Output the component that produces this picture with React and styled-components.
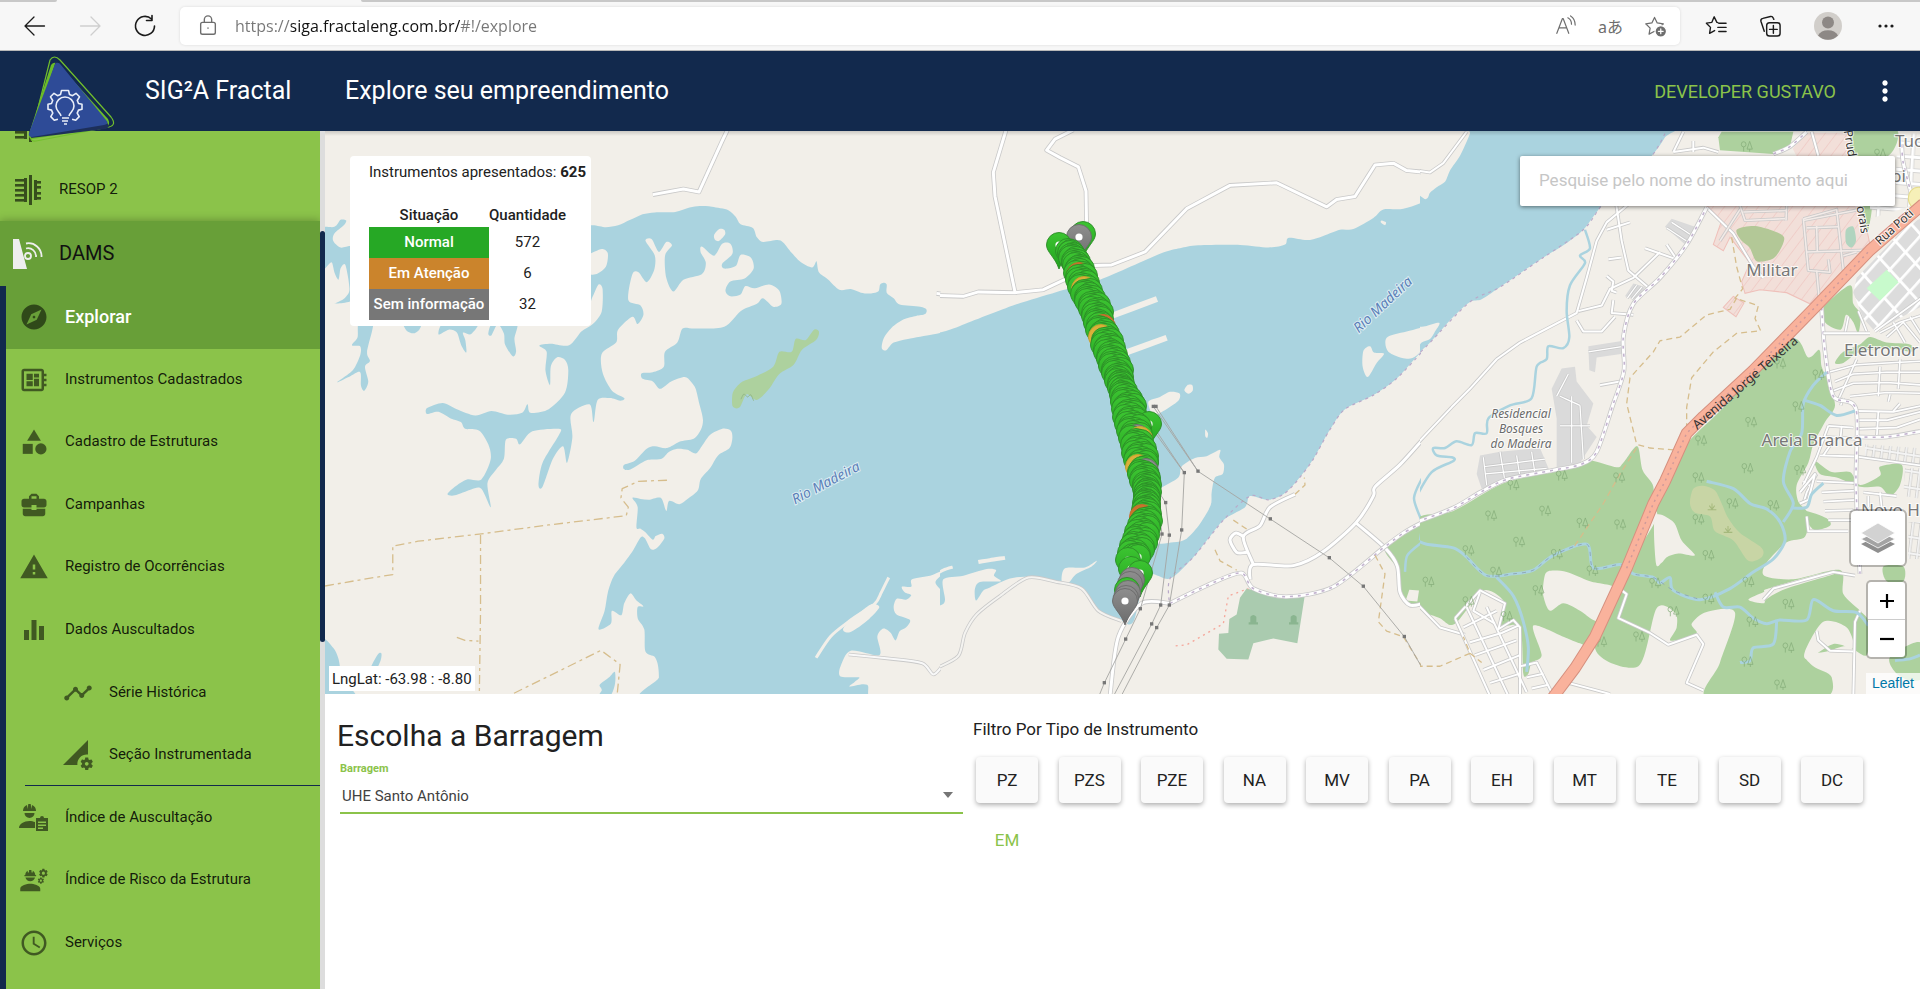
import React from "react";
import styled, { createGlobalStyle, css } from "styled-components";
import {
  MdExplore,
  MdDeveloperBoard,
  MdCategory,
  MdBusinessCenter,
  MdWarning,
  MdTimeline,
  MdPermDataSetting,
  MdAccessTime,
  MdEngineering,
  MdMoreVert,
} from "react-icons/md";

const NAVY = "#12294d";
const GREEN = "#8bc34a";
const DARK_GREEN = "#689f38";

const GlobalStyle = createGlobalStyle`
  *, *::before, *::after { box-sizing: border-box; }
  body { margin: 0; background: #fff; color: #212121; font-family: Roboto, "Liberation Sans", sans-serif; overflow: hidden; }
  button, input, select { font-family: inherit; margin: 0; }
  button { cursor: pointer; }
`;

const Page = styled.div`
  display: flex;
  flex-direction: column;
  height: 100vh;
`;

/* ---------- browser bar ---------- */

const BrowserBar = styled.div`
  flex: none;
  display: flex;
  flex-direction: column;
  height: 51px;
  background: #f7f7f7;
  border-bottom: 1px solid #b8b8b8;
`;

const TabStrip = styled.div`
  display: flex;
  gap: 304px;
  height: 2px;
  &::before { content: ""; width: 57px; background: #c8c8c8; border-bottom-right-radius: 2px; }
  &::after { content: ""; flex: 1; background: #c8c8c8; border-bottom-left-radius: 2px; }
`;

const BrowserRow = styled.div`
  flex: 1;
  display: flex;
  align-items: center;
  padding: 0 7px;
`;

const BarButton = styled.button`
  display: flex;
  align-items: center;
  justify-content: center;
  width: ${(p) => p.$w || 55}px;
  height: 38px;
  padding: 0;
  border: 0;
  background: none;
  color: ${(p) => p.$color || "#1b1b1b"};
  font: ${(p) => p.$size || 15}px "Noto Sans", "Noto Sans CJK JP", sans-serif;
`;

const AddressBox = styled.div`
  flex: 1;
  display: flex;
  align-items: center;
  height: 38px;
  margin: 0 8px;
  padding-right: 2px;
  border-radius: 5px;
  background: #fff;
  box-shadow: 0 0 3px rgba(0, 0, 0, 0.12);
`;

const Address = styled.input`
  flex: 1;
  min-width: 0;
  height: 28px;
  padding: 0;
  border: 0;
  outline: 0;
  color: transparent;
  background: linear-gradient(90deg, #767676 56px, #111 56px, #111 225px, #767676 225px);
  background-clip: text;
  -webkit-background-clip: text;
  font: 16px/28px "Open Sans", "Noto Sans", sans-serif;
`;

/* ---------- application header ---------- */

const Header = styled.header`
  position: relative;
  z-index: 3;
  flex: none;
  display: flex;
  align-items: center;
  height: 80px;
  padding-right: 19px;
  background: ${NAVY};
  color: #fff;
`;

const LogoLink = styled.a`
  flex: none;
  width: 145px;
  height: 80px;
  svg { display: block; overflow: visible; }
`;

const Brand = styled.span`
  width: 200px;
  font-size: 25px;
  line-height: 30px;
`;

const PageTitle = styled.h1`
  flex: 1;
  margin: 0;
  font-size: 25px;
  line-height: 30px;
  font-weight: 400;
`;

const UserButton = styled.button`
  border: 0;
  padding: 2px 0 0;
  background: none;
  color: ${GREEN};
  font-size: 18px;
  line-height: 24px;
`;

const MoreButton = styled.button`
  display: flex;
  margin-left: 33px;
  padding: 0;
  border: 0;
  background: none;
  color: #fff;
`;

/* ---------- side navigation ---------- */

const Body = styled.div`
  flex: 1;
  min-height: 0;
  display: flex;
`;

const Sidebar = styled.aside`
  flex: none;
  display: flex;
  width: 325px;
  background: ${GREEN};
`;

const NavScroll = styled.nav`
  flex: 1;
  min-width: 0;
  overflow: hidden;
`;

const ModuleList = styled.div`
  margin-top: -36px;
`;

const NavLabel = styled.span`
  padding-bottom: 2px;
`;

const ModuleLink = styled.a`
  display: flex;
  align-items: center;
  height: 63px;
  padding-left: 13px;
  gap: 16px;
  color: rgba(0, 0, 0, 0.87);
  font-size: 15px;
  text-decoration: none;
  svg { color: rgba(0, 0, 0, 0.6); }
  ${(p) =>
    p.$open &&
    css`
      height: 65px;
      background: ${DARK_GREEN};
      font-size: 20px;
      color: #111;
      box-shadow: 0 -1px 8px rgba(0, 0, 0, 0.25);
      svg { color: #eee; }
    `}
`;

const SubList = styled.div`
  display: grid;
  grid-auto-rows: 1fr;
  min-height: 688px;
  border-left: 6px solid ${NAVY};
  background: ${GREEN};
`;

const SubLink = styled.a`
  position: relative;
  display: flex;
  align-items: center;
  gap: 16px;
  padding-left: ${(p) => (p.$nested ? 57 : 13)}px;
  color: ${(p) => (p.$active ? "#fff" : "rgba(0,0,0,0.87)")};
  background: ${(p) => (p.$active ? DARK_GREEN : "transparent")};
  font-size: ${(p) => (p.$active ? 18 : 15)}px;
  font-weight: ${(p) => (p.$active ? 500 : 400)};
  text-decoration: none;
  svg { flex: none; color: rgba(0, 0, 0, 0.54); }
  ${(p) =>
    p.$ruled &&
    css`
      &::after {
        content: "";
        position: absolute;
        left: 19px;
        right: 0;
        bottom: 0;
        height: 1px;
        background: ${NAVY};
      }
    `}
`;

const NavFill = styled.div`
  height: 60px;
  border-left: 6px solid ${NAVY};
`;

const ScrollTrack = styled.div`
  flex: none;
  width: 5px;
  padding-top: 100px;
  background: #ddd;
`;

const ScrollThumb = styled.div`
  height: 411px;
  border-radius: 3px;
  background: ${NAVY};
`;

/* ---------- map ---------- */

const Main = styled.main`
  flex: 1;
  min-width: 0;
  display: flex;
  flex-direction: column;
`;

const MapArea = styled.section`
  position: relative;
  flex: none;
  height: 563px;
  overflow: hidden;
  background: #f2efe9;
  &::after {
    content: "";
    position: absolute;
    inset: 0 0 auto 0;
    height: 5px;
    background: linear-gradient(rgba(0, 0, 0, 0.16), transparent);
  }
`;

const MapDrawing = styled.svg`
  display: block;
  width: 100%;
  height: 100%;
`;

const SummaryCard = styled.div`
  position: absolute;
  top: 25px;
  left: 25px;
  width: 241px;
  padding: 4px 0 6px 19px;
  border-radius: 4px;
  background: #fff;
  font-size: 15px;
`;

const SummaryText = styled.p`
  margin: 0 0 18px;
  line-height: 24px;
  white-space: nowrap;
`;

const SummaryTable = styled.table`
  border-collapse: collapse;
  text-align: center;
  th, td { padding: 0; }
  thead th { height: 25px; font-weight: 500; }
  thead th:first-child { width: 120px; }
  tbody th, tbody td { height: 31px; padding-bottom: 2px; }
  tbody td { width: 77px; }
`;

const StatusCell = styled.th`
  background: ${(p) => p.$color};
  color: #fff;
  font-weight: 500;
  white-space: nowrap;
`;

const SearchInput = styled.input`
  position: absolute;
  top: 25px;
  right: 25px;
  width: 375px;
  height: 50px;
  padding: 0 19px 2px;
  border: 0;
  border-radius: 2px;
  background: #fff;
  box-shadow: 0 1px 4px rgba(0, 0, 0, 0.5);
  font-size: 17px;
  outline: 0;
  &::placeholder { color: #c6c6c6; opacity: 1; }
`;

const Coordinates = styled.div`
  position: absolute;
  left: 4px;
  bottom: 3px;
  padding: 1px 3px 0;
  background: #fff;
  font-size: 15px;
  line-height: 24px;
`;

const MapControls = styled.div`
  position: absolute;
  right: 13px;
  bottom: 35px;
  display: flex;
  flex-direction: column;
  align-items: flex-end;
  gap: 13px;
`;

const LayersButton = styled.button`
  display: flex;
  align-items: center;
  justify-content: center;
  width: 58px;
  height: 58px;
  padding: 0;
  border: 2px solid rgba(0, 0, 0, 0.25);
  border-radius: 6px;
  background: #fff;
  background-clip: padding-box;
`;

const ZoomGroup = styled.div`
  display: flex;
  flex-direction: column;
  width: 41px;
  border: 2px solid rgba(0, 0, 0, 0.25);
  border-radius: 5px;
  background: #fff;
  background-clip: padding-box;
`;

const ZoomButton = styled.button`
  display: flex;
  align-items: center;
  justify-content: center;
  height: 37px;
  padding: 0;
  border: 0;
  background: none;
  & + & { height: 38px; border-top: 1px solid #ccc; }
`;

const Attribution = styled.a`
  position: absolute;
  right: 0;
  bottom: 0;
  padding: 0 6px;
  background: rgba(255, 255, 255, 0.75);
  color: #0078a8;
  font: 14px/21px "Liberation Sans", sans-serif;
  text-decoration: none;
`;

/* ---------- filter panel ---------- */

const Panel = styled.section`
  display: grid;
  grid-template-columns: 2fr 3fr;
`;

const DamColumn = styled.div`
  display: flex;
  flex-direction: column;
  padding: 22px 0 0 12px;
`;

const DamTitle = styled.h2`
  margin: 0 0 5px;
  font-size: 30px;
  line-height: 40px;
  font-weight: 400;
`;

const FieldLabel = styled.label`
  padding-left: 3px;
  color: ${GREEN};
  font-size: 11px;
  line-height: 16px;
  font-weight: 700;
`;

const SelectWrap = styled.div`
  display: flex;
  align-items: center;
  height: 37px;
  margin-left: 3px;
  padding-right: 10px;
  border-bottom: 2px solid ${GREEN};
`;

const DamSelect = styled.select`
  flex: 1;
  height: 35px;
  padding: 2px 2px 0;
  border: 0;
  outline: 0;
  appearance: none;
  background: none;
  color: #424242;
  font-size: 15px;
`;

const FilterColumn = styled.div`
  padding: 23px 57px 0 10px;
`;

const FilterTitle = styled.h3`
  margin: 0 0 16px;
  font-size: 17px;
  line-height: 24px;
  font-weight: 400;
`;

const TypeGrid = styled.div`
  display: grid;
  grid-template-columns: repeat(11, 62px);
  justify-content: space-between;
  row-gap: 14px;
  padding-left: 3px;
`;

const TypeButton = styled.button`
  height: 46px;
  padding: 0;
  border: 0;
  border-radius: 4px;
  font-size: 17px;
  color: ${(p) => (p.$flat ? GREEN : "#212121")};
  background: ${(p) => (p.$flat ? "none" : "#fafafa")};
  box-shadow: ${(p) => (p.$flat ? "none" : "0 2px 5px rgba(0,0,0,0.32)")};
`;

/* ---------- small drawings ---------- */

const Line = ({ size = 24, width = 1.3, children, view = "0 0 24 24" }) => (
  <svg width={size} height={size} viewBox={view} fill="none" stroke="currentColor" strokeWidth={width} strokeLinecap="round" strokeLinejoin="round" aria-hidden="true">
    {children}
  </svg>
);

const Resop = () => (
  <svg width="30" height="30" viewBox="0 0 30 30" fill="currentColor" aria-hidden="true">
    {[4, 9, 14, 19, 24].map((y) => <rect key={y} x="2" y={y} width="9" height="2.6" />)}
    <path d="M11 3h3v24h-3zM16 0h3v30h-3zM21 5h3v20h-3z" />
    {[6, 11, 17, 22].map((y) => <rect key={y} x="24" y={y} width="4" height="2.6" />)}
  </svg>
);

const Dams = () => (
  <svg width="30" height="30" viewBox="0 0 30 30" fill="none" stroke="currentColor" strokeWidth="1.8" aria-hidden="true">
    <path d="M0 0h6l8 30H0z" fill="currentColor" stroke="none" />
    <circle cx="15" cy="17" r="3" />
    <path d="M13 9.500a8 8 0 0 1 10 8.500M13 4.500a13 13 0 0 1 15.500 13.500" />
  </svg>
);

const Bars = () => (
  <svg width="30" height="30" viewBox="0 0 30 30" fill="currentColor" aria-hidden="true">
    <path d="M5 15h5v10H5zM12.500 5h5v20h-5zM20 11h5v14h-5z" />
  </svg>
);

const WorkerReport = () => (
  <svg width="30" height="30" viewBox="0 0 30 30" fill="currentColor" aria-hidden="true">
    <path d="M4 8a6.500 6.500 0 0 1 4-6l.6 4L9.300 1h2.400l.7 5 .6-4a6.500 6.500 0 0 1 4 6H4zM5.500 10h10a5 5 0 0 1-10 0zM0 25c0-4 5-7 10.500-7 2 0 4 .4 5.500 1.100V25z" />
    <path d="M17 15h4a2 2 0 0 1 4 0h4v13H17zM19 18.500v1.500h8v-1.500zM19 21.500v1.500h8v-1.500zM19 24.500v1.500h5v-1.500z" fillRule="evenodd" />
  </svg>
);

const HALF_GEAR = "M65 90.500h3.500l1 4 3 1.200 3.500-2.400 3.500 3.500-2.200 3.700 1.200 3 3.500.8v5l-3.500.8-1.300 3 2 3.500-3.500 3.700-3.600-1";

const Logo = () => (
  <svg width="145" height="80" viewBox="0 51 145 80" aria-hidden="true">
    <path d="M50 60q4-6 10 0l51 57q6 8-2 10l-73 14q-6 1-5-5z" fill="none" stroke="#72c02c" strokeWidth="1.2" />
    <path d="M51 65q3-4 7-1l50 55q3 6-2 8l-73 12q-5 0-4-5z" fill="#6bbd28" />
    <path d="M56 61l52 63q2 4-3 5l-74 9z" fill="#1d2f5a" />
    <path d="M55 64q3-3 6 1l45 55q4 4-2 5l-72 12q-4 0-3-4z" fill="#2e4b97" />
    <g fill="none" stroke="#e9eef8" strokeWidth="1.6" strokeLinejoin="round">
      <path d={HALF_GEAR} />
      <path d={HALF_GEAR} transform="translate(130 0) scale(-1 1)" />
      <path d="M61 116c-1-4-5-5-5-10a9 9 0 0 1 18 0c0 5-4 6-5 10" />
      <path d="M62 118h7M62 121h6M64 124h3" />
    </g>
  </svg>
);

const Layers = () => (
  <svg width="34" height="31" viewBox="0 0 34 31" aria-hidden="true">
    <path d="M0 21l17-8 17 8-17 9z" fill="#8f8f8f" />
    <path d="M0 16l17-8 17 8-17 9z" fill="#a4a4a4" stroke="#fff" strokeWidth=".8" />
    <path d="M0 10L17 0l17 10-17 10z" fill="#d2d2d2" stroke="#fff" strokeWidth=".8" />
  </svg>
);

/* ---------- map drawing ---------- */

const parse = (s) => s.trim().split(/\s+/).map((p) => p.split(",").map(Number));

const straight = (s) => "M" + parse(s).map((p) => p.join(",")).join("L");

// Catmull-Rom curve through the listed points
const curve = (s, closed) => {
  const p = parse(s);
  const n = p.length;
  const at = (i) => (closed ? p[(i + n) % n] : p[Math.max(0, Math.min(n - 1, i))]);
  let d = "M" + p[0].join(",");
  for (let i = 0; i < (closed ? n : n - 1); i++) {
    const [a, b, c, e] = [at(i - 1), at(i), at(i + 1), at(i + 2)];
    const r = (v) => Math.round(v);
    d += `C${r(b[0] + (c[0] - a[0]) / 7)},${r(b[1] + (c[1] - a[1]) / 7)} ${r(c[0] - (e[0] - b[0]) / 7)},${r(c[1] - (e[1] - b[1]) / 7)} ${c[0]},${c[1]}`;
  }
  return closed ? d + "Z" : d;
};

const WATER = "#aad3df";
const LAND = "#f2efe9";
const WOOD = "#add19e";

const Area = ({ pts, fill = WATER, ...rest }) => <path d={curve(pts, true)} fill={fill} {...rest} />;
const Poly = ({ pts, fill, ...rest }) => <path d={straight(pts) + "Z"} fill={fill} {...rest} />;
const Stroke = ({ pts, color, w = 1, sharp, ...rest }) => (
  <path d={sharp ? straight(pts) : curve(pts)} fill="none" stroke={color} strokeWidth={w} vectorEffect="non-scaling-stroke" strokeLinejoin="round" {...rest} />
);
const Roads = ({ lines, w = 3, casing = "#c9c9c9", color = "#fff", sharp, dots }) => (
  <g>
    {lines.map((l) => <Stroke key={l} pts={l} sharp={sharp} color={casing} w={w + 1.6} />)}
    {lines.map((l) => <Stroke key={l} pts={l} sharp={sharp} color={color} w={w} />)}
    {dots && lines.map((l) => <Stroke key={l} pts={l} sharp={sharp} color="#c3b3cf" w={1.6} strokeDasharray="3 5" />)}
  </g>
);
const Tracks = ({ lines, color = "#d6bd8c", dash = "6 4" }) =>
  lines.map((l) => <Stroke key={l} pts={l} color={color} w={1.3} sharp strokeDasharray={dash} />);

const MAIN_LAKE =
  "664,258 700,263 730,258 760,243 790,228 820,223 870,222 905,210 930,206 960,208 1000,217 1018,235 1030,255 1060,265 1070,290 1085,303 1120,298 1135,305 1155,332 1175,355 1205,372 1216,355 1222,385 1245,405 1272,432 1300,430 1325,440 1350,442 1368,436 1372,418 1380,413 1388,418 1388,440 1405,455 1420,472 1470,478 1485,485 1482,498 1460,503 1430,512 1400,535 1380,565 1376,590 1387,596 1405,575 1440,565 1500,553 1540,543 1568,532 1620,515 1620,1560 825,1560 830,1480 828,1450 820,1425 797,1410 794,1350 778,1320 778,1290 792,1288 775,1272 760,1253 745,1280 738,1312 715,1300 712,1335 682,1350 697,1300 705,1250 720,1205 745,1170 765,1140 785,1102 795,1103 810,1133 825,1130 843,1105 838,1092 822,1098 815,1108 797,1088 785,1078 775,1075 778,1020 765,995 785,998 805,1000 835,995 848,1030 855,1003 880,1012 900,998 925,975 932,945 955,915 975,880 1003,860 1010,830 1005,812 985,808 955,825 935,855 920,875 900,865 875,862 855,870 835,890 800,893 760,918 744,917 745,905 770,895 800,862 820,855 850,860 880,843 915,835 933,810 938,785 930,745 920,700 908,680 893,668 860,680 833,700 815,680 790,673 788,658 815,655 842,640 845,600 875,575 888,537 920,537 990,532 1030,490 1070,470 1085,455 1110,478 1130,470 1125,435 1100,418 1065,428 1042,422 1030,445 1005,450 993,435 1005,410 1040,402 1062,375 1055,345 1030,338 1018,368 990,375 985,362 1010,335 1005,308 985,308 965,340 935,315 932,330 945,360 935,390 890,405 865,437 848,400 845,340 862,312 848,303 830,330 812,295 797,300 820,340 818,380 800,412 780,385 765,390 755,460 785,475 792,500 778,525 765,505 730,540 725,575 690,605 693,660 715,705 745,725 735,732 710,725 680,730 670,790 660,742 615,768 618,830 605,900 595,855 570,890 545,965 535,960 545,900 585,825 585,808 520,815 490,850 480,835 455,838 450,890 430,920 410,955 418,1020 395,970 370,972 330,988 312,985 330,965 360,945 395,945 418,890 412,850 390,813 355,808 345,790 320,780 290,762 262,768 262,752 300,738 335,755 380,772 420,760 460,770 495,765 508,742 515,765 560,755 600,710 608,650 600,622 580,615 565,640 563,690 552,650 555,600 537,583 565,578 610,582 640,545 668,525 690,490 692,430 682,418 668,450 655,480 640,420 655,395 680,388 700,370 705,335 690,322 650,335 640,280";

const West = () => (
  <svg x="0" y="0" width="616" height="563" viewBox="12 3 1509 1522" preserveAspectRatio="none">
    <Area pts={MAIN_LAKE} />
    <Area fill={LAND} pts="965,285 978,268 990,270 992,283 978,300 968,298" />
    <Area pts="-10,272 35,262 50,243 64,245 58,258 35,280 32,300 50,318 90,322 90,450 35,470 60,455 72,430 62,365 50,375 45,405 35,385 28,358 12,375 -10,390" />
    <Area pts="95,520 92,560 78,582 98,585 98,610 80,650 42,682 75,665 98,655 100,690 108,705 118,680 110,640 122,625 115,600 130,520" />
    <Area pts="205,520 212,543 228,550 243,540 248,515" />
    <Area pts="305,520 290,553 315,540 335,548 345,580 358,602 356,570 350,548 370,552 385,520" />
    <Area pts="425,520 412,550 420,555 435,525 450,550 453,580 472,612 480,600 476,565 482,520" />
    <Area pts="0,1380 32,1400 45,1430 55,1480 90,1540 0,1540" />
    <Area pts="150,1415 140,1420 118,1470 130,1475 148,1435" />
    <Area pts="722,1465 708,1480 685,1500 690,1515 676,1540 710,1530 722,1500" />
    <Area fill={WOOD} pts="1011,748 1010,715 1020,695 1035,680 1070,665 1110,640 1125,600 1155,600 1165,565 1190,568 1210,540 1222,545 1215,568 1180,595 1160,635 1125,660 1100,700 1070,730 1045,715 1028,750" />
    <Stroke pts="1031,728 1038,714 1047,722 1055,716 1062,732" color="#94b98a" w={1} />
    <Stroke pts="1393,1210 1375,1250 1358,1282 1300,1325 1250,1370 1215,1427" color={LAND} w={3} />
    <Area fill={LAND} pts="1370,1290 1345,1322 1298,1358 1283,1345 1345,1285" />
    <Area fill={LAND} pts="1550,1180 1500,1203 1450,1215 1448,1235 1425,1235 1432,1250 1448,1258 1435,1270 1412,1268 1405,1290 1412,1310 1445,1325 1435,1345 1420,1355 1410,1380 1398,1360 1380,1348 1365,1370 1370,1420 1300,1408 1275,1450 1275,1478 1320,1480 1310,1492 1297,1505 1340,1500 1365,1545 1600,1545 1600,1290 1523,1287 1523,1250 1508,1220" />
    <Roads lines={["815,175 890,160 928,168 985,30 1000,-5", "1510,442 1570,452"]} w={3} sharp />
    <Roads lines={["1295,1418 1400,1430 1475,1442 1503,1472 1530,1440"]} w={2} color="#f8f8f8" />
    <Tracks lines={["12,1233 90,1218 178,1202 178,1125 240,1112 395,1092 560,1068 750,1043 755,1020 737,995 740,970 780,950 852,947", "393,1095 393,1300 390,1530", "335,1372 355,1380 388,1382", "475,1523 600,1455 688,1407 735,1445 728,1523"]} dash="9 4 3 4" />
  </svg>
);

const pylons = "640,748 774,923 991,1052 1168,1157 1270,1234 1393,1370 733,927 725,1082 677,1008 688,1096 666,1093 662,1285 688,1285 601,1295 635,1336 650,1346 557,1377 493,1495 648,748";

const Center = () => (
  <svg x="615" y="0" width="481" height="563" viewBox="0 3 1443 1522" preserveAspectRatio="none">
    <Area pts="-60,560 0,548 60,530 225,473 350,438 480,405 660,335 720,320 775,312 900,311 985,318 1035,310 1045,292 1100,298 1140,290 1200,270 1240,268 1300,238 1330,215 1390,213 1460,190 1520,140 1520,530 1440,603 1370,672 1300,717 1215,755 1170,810 1120,890 1070,950 1030,985 985,1000 930,990 915,1020 850,1055 800,1110 760,1155 690,1213 620,1205 580,1330 540,1325 475,1297 430,1240 370,1222 265,1208 210,1213 150,1237 130,1245 108,1272 105,1240 120,1222 182,1220 162,1205 168,1190 140,1187 70,1205 10,1215 15,1270 0,1285 -60,1290" />
    <Area fill={LAND} pts="660,970 715,940 725,910 765,887 800,882 840,865 838,885 852,905 848,930 825,940 815,980 812,1015 780,1065 740,1105 700,1115 640,1110 620,1000" />
    <Area fill={LAND} pts="625,735 660,722 690,708 718,712 715,732 670,760 640,772" />
    <Area fill={LAND} pts="733,703 742,690 757,690 758,705 745,713" />
    <Area fill={LAND} pts="796,810 804,820 802,832 796,828" />
    <Stroke pts="500,508 651,457" color={LAND} w={6} />
    <Stroke pts="530,611 680,562" color={LAND} w={6} />
    <Area fill={LAND} pts="1340,562 1400,545 1495,525 1488,550 1430,610 1395,618 1345,600" />
    <Area fill={LAND} pts="1270,598 1290,585 1302,602 1332,605 1310,630 1283,668 1268,640" />
    <Area fill={LAND} pts="1325,245 1338,250 1335,258 1322,250" />
    <Stroke pts="115,1168 150,1163 195,1157" color={LAND} w={4} />
    <Stroke pts="-10,1200 10,1190 38,1182" color={LAND} w={3} />
    <Area fill={LAND} pts="365,1220 375,1185 435,1183 470,1165 455,1180 410,1200 385,1225" />
    <Stroke pts="1443,603 1370,672 1300,717 1215,755 1170,810 1120,890 1070,950 1030,985 985,1000 930,990 850,1055 760,1155 690,1213 688,1280" color="#b9a9c9" w={1.2} strokeDasharray="3 4" />
    <Area fill={WOOD} pts="1335,1135 1390,1095 1450,1060 1520,1040 1520,1330 1450,1280 1405,1285 1380,1250 1375,1190" />
    <Poly fill={LAND} pts="1408,1243 1437,1245 1432,1275 1397,1272" />
    <Poly fill="#aacbaf" pts="920,1240 1020,1265 1095,1255 1072,1388 1000,1375 940,1388 925,1432 860,1430 835,1405 837,1362 865,1360 868,1322 890,1310 900,1265" />
    <path d="M926,1337v-6h5v-15q9,-9 18,0v15h5v6zM1047,1337v-6h5v-15q9,-9 18,0v15h5v6z" fill="#8ab590" />
    <Roads sharp w={3} lines={["200,-5 160,115 165,180 225,438", "400,0 345,25 320,55 360,75 415,100 438,165 440,270", "0,448 70,450 115,438 225,440 310,432 380,402", "440,367 515,365 615,330 740,213 870,150 1010,143 1160,208 1190,188 1245,180 1305,95 1360,90 1400,110 1460,115"]} />
    <Roads w={2} color="#f4f3f0" lines={["-10,1455 55,1422 75,1360 110,1310 180,1260 265,1210 350,1222 425,1240 475,1300 545,1328"]} />
    <Roads lines={["930,1215 940,1175 1060,1178 1150,1140 1248,1062 1300,990 1305,965 1380,905 1450,835", "1248,1062 1335,1130 1372,1180 1380,1250 1410,1285 1450,1280", "940,1175 910,1100 960,1070 990,1020 1065,985", "912,1100 888,1090 870,1108 890,1142 922,1142", "510,1530 535,1370 605,1280 690,1280"]} />
    <Roads dots lines={["690,1280 830,1220 905,1198 940,1240 1040,1262 1180,1235 1330,1130 1390,1090 1450,1060"]} />
    <Stroke pts="1450,935 1422,995 1445,1060 1440,1110" color={WATER} w={2.500} />
    <Stroke pts="1445,1115 1402,1150 1395,1195" color={WATER} w={2.500} />
    <Tracks dash="2 4" color="#f5a79b" lines={["707,1395 740,1392 850,1335 865,1260 925,1240"]} />
    <Tracks lines={["1305,1150 1335,1200 1315,1330 1340,1355 1390,1370 1445,1450", "825,1135 840,1165 890,1190", "880,1055 930,1085", "1065,985 1095,960 1093,940"]} />
    {["640,748 774,923 991,1052 1168,1157 1270,1234 1393,1370 1446,1454", "648,748 774,923", "600,748 733,927 725,1082 688,1285 650,1346 545,1528", "630,800 733,927", "650,970 677,1008 688,1096 662,1285 635,1336 522,1528", "645,960 666,1093 601,1295 557,1377 493,1495 478,1528"].map((l) => (
      <Stroke key={l} pts={l} sharp color="#a5a5a2" w={0.9} />
    ))}
    {parse(pylons).map(([x, y]) => <rect key={x + "-" + y} x={x - 5} y={y - 5} width="10" height="9" fill="#777" />)}
  </svg>
);

const trees =
  "980,45 1080,632 1195,662 1135,748 993,790 843,840 982,915 835,940 937,1010 1060,1015 835,1053 865,1150 985,1222 865,1268 1105,1282 997,1330 1105,1400 982,1438 1080,1500 705,1225 760,1302 657,1370 543,1384 517,1192 600,1067 487,1063 375,1030 213,1043 297,1114 145,1137 410,1147 228,1195 25,1222 355,1245 260,1315 597,940 280,960 425,935 1140,920 1380,65 145,1275";

const TRUNK = "390,1545 465,1455 525,1370 620,1185 700,1010 735,950 800,820 850,775 1000,650 1190,475 1350,325 1510,200";

const East = () => (
  <svg x="1095" y="0" width="500" height="563" viewBox="0 3 1500 1522" preserveAspectRatio="none">
    <defs>
      <pattern id="hatch" width="26" height="26" patternUnits="userSpaceOnUse" patternTransform="rotate(40)">
        <rect width="26" height="26" fill="#f2dfd9" />
        <rect width="2" height="26" fill="#efc8c3" />
      </pattern>
      <pattern id="blocks" width="66" height="42" patternUnits="userSpaceOnUse" patternTransform="rotate(-45)">
        <rect width="66" height="42" fill="#dcdcdc" />
        <path d="M0 4h66M4 0v42" stroke="#fff" strokeWidth="8" />
      </pattern>
      <pattern id="streets" width="92" height="36" patternUnits="userSpaceOnUse" patternTransform="rotate(4)">
        <path d="M0 6h92M7 0v36" stroke="#cbcbcb" strokeWidth="12" />
        <path d="M0 6h92M7 0v36" stroke="#fff" strokeWidth="8" />
      </pattern>
      <pattern id="lanes" width="24" height="44" patternUnits="userSpaceOnUse" patternTransform="rotate(8)">
        <path d="M0 5h24M5 0v44" stroke="#c0c0c0" strokeWidth="8" />
        <path d="M0 5h24M5 0v44" stroke="#f4f4f4" strokeWidth="5" />
      </pattern>
      <g id="tree" stroke="#83ab77" strokeWidth="2" fill="none">
        <circle cx="-9" cy="-6" r="7" />
        <path d="M-9 1v12M9 -14l-8 21h16zM9 7v7" />
      </g>
    </defs>

    <Area pts="-40,200 18,187 30,170 50,155 75,140 90,110 120,70 150,10 165,-30 770,-30 735,20 700,65 620,140 545,205 490,270 430,312 370,345 240,425 185,458 150,465 95,510 30,575 0,600 -40,630" />
    <Area fill={LAND} pts="-20,540 20,530 58,522 45,545 30,565 5,575 -20,600" />
    <Stroke pts="735,10 700,65 620,140 545,205 490,270 370,345 240,425 150,465 30,575 0,602" color="#b9a9c9" w={1.2} strokeDasharray="3 4" />

    <Area fill={WOOD} pts="-20,1062 100,1030 250,955 400,925 480,905 510,893 590,912 610,900 652,855 668,920 700,965 690,1040 610,1180 560,1290 510,1388 480,1388 430,1370 340,1340 365,1420 335,1440 325,1470 310,1470 302,1350 262,1340 235,1350 255,1280 190,1245 105,1335 60,1320 -20,1270" />
    <Area fill={LAND} pts="372,1215 385,1193 440,1195 510,1220 600,1245 560,1330 520,1325 480,1300 430,1280 390,1300 370,1260" />
    <Area fill={WOOD} pts="1108,568 1165,615 1198,595 1205,640 1225,680 1245,745 1215,790 1180,850 1165,900 1130,960 1135,1005 1165,1040 1155,1100 1100,1115 1040,1170 1033,1205 1120,1215 1260,1190 1270,1255 1320,1300 1345,1330 1340,1420 1280,1395 1220,1410 1155,1420 1180,1450 1235,1480 1200,1540 865,1540 900,1440 945,1305 860,1303 815,1335 830,1360 790,1375 750,1380 770,1345 765,1305 710,1293 655,1450 525,1400 620,1190 710,1050 700,1000 800,850 900,760" />
    <Area fill={LAND} pts="705,1045 760,1060 785,1110 825,1150 775,1145 740,1155 725,1170 708,1172" />
    <Area fill={LAND} pts="985,1270 1030,1250 1045,1240 1200,1200 1258,1196 1100,1240 1040,1268 1030,1280" />
    <Area fill={LAND} pts="1210,1330 1280,1345 1300,1400 1240,1390 1165,1430 1155,1410" />
    <Area fill="#c8d5a5" pts="820,970 850,962 885,975 905,1010 925,1050 960,1090 1025,1130 1025,1155 985,1165 940,1110 885,1085 870,1045 825,1035 810,1010" />
    <Poly fill={WOOD} pts="905,5 1120,5 1110,45 1060,65 900,55 895,20" />
    <Area fill={WOOD} pts="1295,0 1430,0 1405,70 1300,70" />
    <Area fill={WOOD} pts="1210,480 1290,420 1300,470 1322,500 1315,550 1300,520 1278,500 1262,540 1215,520" />
    <Area fill={WOOD} pts="1245,630 1270,600 1320,580 1350,560 1400,575 1470,580 1480,600 1400,590 1320,600 1270,630" />
    <Area fill={WOOD} pts="1185,895 1235,925 1290,925 1320,960 1380,935 1380,910 1445,905 1440,960 1410,990 1380,965 1320,965 1250,940 1200,930" />
    <Area fill={WOOD} pts="1150,1030 1220,1050 1230,1070 1180,1080" />
    <Area fill={WOOD} pts="1390,1180 1450,1180 1450,1220 1400,1220" />
    <Area fill={WOOD} pts="1410,1425 1500,1385 1520,1470 1480,1490 1430,1470" />
    <Poly fill="url(#hatch)" stroke="#efc0ba" strokeWidth="3" pts="860,205 1325,205 1350,310 1170,470 1100,440 1020,432 975,442 965,410 990,360 930,290 910,327 880,310 905,245" />
    <Poly fill="url(#hatch)" pts="1118,50 1160,8 1290,8 1290,72 1130,72" />
    <Poly fill="url(#hatch)" stroke="#efc0ba" strokeWidth="3" pts="910,480 940,450 972,468 948,505" />
    <Area fill="#b3c897" pts="950,270 1000,260 1050,270 1092,290 1080,325 1055,350 1010,355 990,320 965,300" />
    <Area fill="#b0d4bf" pts="1278,270 1300,262 1308,300 1295,318 1278,305" />
    <Area fill={WOOD} pts="1325,205 1355,205 1345,270 1335,260" />
    <Poly fill="url(#blocks)" pts="1310,400 1460,260 1520,230 1520,470 1365,545 1330,510 1300,440" />
    <Poly fill="#c8facc" pts="1340,428 1400,378 1436,412 1380,462" />
    <Poly fill="url(#streets)" pts="1430,70 1520,70 1520,180 1460,210 1350,240 1350,205 1425,200" />
    <Poly fill="url(#streets)" pts="1440,10 1520,10 1520,70 1440,70" />

    <Poly fill="#dadada" pts="180,880 240,870 360,860 388,920 300,940 185,970 170,930" />
    <Poly fill="#dadada" pts="395,700 425,645 465,640 470,680 520,740 500,800 530,830 480,900 410,915 410,780" />
    <Poly fill="#dadada" pts="735,262 755,240 825,262 795,310" />
    <Poly fill="#dadada" pts="505,585 610,570 608,605 530,615 525,655 508,650" />
    <Poly fill="#dadada" pts="615,450 640,415 675,425 660,460" />
    <Poly fill="url(#lanes)" pts="1335,850 1520,862 1520,905 1460,900 1335,885" />
    <Poly fill="url(#lanes)" pts="1455,915 1520,915 1520,1000 1450,990" />
    <Poly fill="url(#lanes)" pts="1465,1060 1520,1060 1520,1160 1465,1160" />
    <Roads w={1.2} casing="#c9c9c9" lines={["190,885 200,960", "195,910 375,890", "195,930 380,915", "240,870 255,950", "290,880 300,940", "335,870 345,930", "410,720 445,660", "420,800 510,800", "455,720 455,900", "420,720 480,745", "480,745 490,890", "740,265 800,300", "755,250 815,285", "505,600 610,585", "622,455 650,420", "635,458 665,425"]} />
    <Roads sharp w={1.6} lines={["1225,655 1310,635 1400,630 1510,625", "1245,680 1300,660 1400,655 1510,655", "1240,705 1300,685 1400,683 1510,690", "1290,720 1400,710 1510,712", "1380,640 1375,720", "1440,620 1435,700", "1310,620 1255,730", "1270,725 1262,745", "1410,715 1405,735", "1365,545 1480,470 1510,450", "1380,548 1440,520 1510,500", "1400,560 1450,520 1500,575", "1420,520 1455,575", "1470,505 1505,555", "1315,490 1340,545", "1275,550 1285,505"]} />
    <Roads sharp w={1.8} lines={["1310,760 1420,762 1510,745", "1310,785 1400,785 1510,760", "1310,808 1430,805 1510,780", "1375,762 1370,835", "1420,760 1440,740", "1225,800 1300,805", "1265,800 1262,830", "1215,830 1310,835", "1200,880 1310,883 1510,908", "1225,800 1190,885 1150,960", "1240,840 1210,880", "1190,950 1310,955", "1205,980 1310,975", "1210,1005 1310,1000", "1215,1030 1300,1028", "1225,1055 1310,1055", "1190,930 1160,980 1150,1010", "1150,950 1175,965", "1380,980 1385,1020", "1345,990 1345,1020", "1330,980 1430,990"]} />
    <Roads sharp w={2} lines={["140,5 70,90 30,115 -10,110", "-10,850 95,750 150,700 230,620 300,575 470,495 500,400 530,300 560,250 640,190", "475,490 545,475 570,430 640,400 720,330", "585,180 605,300 625,380 690,430", "560,270 630,250", "675,320 770,350", "740,310 770,350", "860,210 940,280 1000,370 1030,400", "470,515 490,545 545,545 585,505", "565,350 605,345", "580,460 575,495 640,500", "540,690 600,680", "560,395 580,410 575,435 590,440"]} />
    <Roads dots w={3} lines={["-10,1060 100,1022 180,980 260,945 400,920 480,905 530,870 580,740 612,650 610,560 640,470 720,400 800,310 860,210", "1060,65 1110,45 1160,5", "1205,480 1215,600 1240,720 1308,755 1308,960 1320,1200", "1445,40 1450,90 1470,160", "1310,830 1400,830 1500,815"]} />
    <Roads sharp w={2} lines={["760,60 850,48 895,60", "820,30 820,60", "760,60 790,5", "1175,5 1195,70", "1210,550 1350,550", "1140,980 1185,930 1165,1000 1140,1010", "1160,1045 1165,1085 1285,1085", "605,1245 620,1255 595,1320 690,1360 745,1392 830,1365 850,1390 800,1495 850,1515", "1190,1355 1195,1380 1230,1408 1300,1410", "1030,1270 1060,1240 1240,1195 1305,1205", "1300,1530 1305,1330 1320,1300", "445,1495 570,1525", "-10,1280 60,1345 135,1365"]} />
    <Roads sharp w={1.6} color="#f3ebe8" lines={["960,205 975,245 1095,240", "970,222 1100,218", "1100,205 1098,245", "1150,240 1165,380 1230,385 1225,350", "1150,240 1250,215 1270,380", "1160,265 1255,262", "1150,245 1320,215", "1160,330 1350,325", "1190,260 1192,330", "1190,380 1200,480", "900,300 960,215", "1270,340 1310,330"]} />
    <Roads sharp w={2} lines={["105,1320 180,1245 255,1280 235,1350 280,1325 300,1345 300,1530", "105,1320 210,1530", "140,1290 265,1530", "180,1250 160,1300 225,1335", "200,1290 320,1520", "130,1345 230,1300", "150,1385 245,1360 295,1340", "165,1420 290,1380", "190,1460 300,1420", "210,1495 300,1470", "300,1450 350,1440 400,1530", "320,1480 370,1470", "335,1510 385,1500"]} />

    <Stroke pts="495,270 510,320 480,340 495,360 450,420 440,490 448,560 430,590 385,585 380,620 350,640 335,725 270,745 205,780 200,820 165,820 155,852 110,842 75,860 40,860 50,880 95,885 100,895 35,925 -10,990" color={WATER} w={2.500} />
    <Stroke pts="-10,1110 20,1120 100,1130 140,1155 200,1205 280,1200 340,1190 400,1150 500,1120 520,1185 600,1175 640,1200 700,1210 720,1225 750,1210 760,1245 840,1270 930,1240 1000,1195 1060,1160 1095,1110 1080,1060 1040,1025 990,1010 940,970 860,950" color={WATER} w={3} />
    <Stroke pts="1090,1060 1120,1010 1090,950 1110,870 1145,820 1150,740 1180,690 1220,655" color={WATER} w={3} />
    <Stroke pts="1150,730 1200,745 1250,772 1305,760" color={WATER} w={3} />
    <Stroke pts="1115,1022 1160,1020 1175,985 1210,955" color={WATER} w={3} />
    <Stroke pts="230,1210 280,1260 310,1330 325,1400 320,1465" color={WATER} w={3} />
    <Stroke pts="885,1250 910,1290 960,1290 1000,1320 1040,1335 1080,1325 1160,1325 1180,1270 1240,1300 1310,1305 1345,1340" color={WATER} w={3} />
    <Stroke pts="1070,1325 1060,1390 1000,1400 990,1435 960,1440" color={WATER} w={3} />
    <Stroke pts="1425,1435 1470,1430 1500,1420" color={WATER} w={3} />
    <Stroke pts="140,1155 200,1205 280,1200 340,1190 400,1150 500,1120 520,1185 600,1175 640,1200 700,1210 760,1245 840,1270" color="#8fa9b8" w={1} strokeDasharray="4 5" />

    <Tracks lines={["935,290 950,370 968,430 945,455 1015,475 1005,510 1022,543 950,550 880,600 815,670 800,750 800,810 760,865 690,860 650,850 620,740 630,670 700,600 720,570 780,560 860,500 930,485 950,455", "650,860 600,930 550,1010 460,1130", "-10,1450 60,1450 150,1415 130,1370", "150,1415 185,1440"]} />
    {parse(trees).map(([x, y]) => <use key={x + "-" + y} href="#tree" x={x} y={y} />)}
    <path d="M863 1027h26M876 1010v16M868 1016l8 10 8-10M911 1088h26M924 1071v16M916 1077l8 10 8-10" stroke="#a5b97d" strokeWidth="3" fill="none" />

    <circle cx="1495" cy="185" r="30" fill="#f6f0b8" stroke="#e5dc8c" strokeWidth="3" />
    <Stroke sharp pts={TRUNK} color="#d5907f" w={12} />
    <Stroke sharp pts={TRUNK} color="#f9b29c" w={10} />
    <Stroke sharp pts="620,1185 700,1010 735,950 800,820 850,775 1000,650 1190,475 1350,325" color="#cf9a9a" w={1.5} strokeDasharray="2 4" />
  </svg>
);

const PlaceLabel = styled.text`
  font-family: "Noto Sans", sans-serif;
  font-size: ${(p) => p.$size}px;
  font-style: ${(p) => (p.$italic ? "italic" : "normal")};
  text-anchor: ${(p) => (p.$start ? "start" : "middle")};
  fill: ${(p) => p.$color || "#777"};
  stroke: ${(p) => p.$halo || "rgba(255,255,255,0.8)"};
  stroke-width: 2px;
  paint-order: stroke;
`;

const PIN = "M0,24C-4,12 -12.500,7 -12.500,0A12.500,12.500 0 0 1 12.500,0C12.500,7 4,12 0,24Z";
const pinFill = { green: "url(#pinGreen)", grey: "url(#pinGrey)", amber: "#d9b13a", orange: "#c9742c" };
const pinEdge = { green: "#2b8a27", grey: "#6a6a6a", amber: "#c9a02e", orange: "#c96a2c" };

const Pin = ({ x, y, tone }) => (
  <g transform={`translate(${Math.round(x)} ${Math.round(y)})`}>
    <path d={PIN} fill={pinFill[tone]} stroke={pinEdge[tone]} strokeWidth="0.9" />
    <circle r="3.600" fill="#fff" />
  </g>
);

// left and right limits of the row of instruments along the dam, by height
const SPINE = [
  [120, 743, 745], [135, 750, 757], [150, 753, 761], [165, 759, 768], [180, 767, 776], [192, 771, 777],
  [210, 777, 786], [240, 788, 796], [258, 796, 798], [275, 798, 810], [290, 801, 812], [310, 807, 818],
  [330, 811, 822], [345, 815, 823], [360, 821, 824], [380, 819, 823], [392, 815, 826], [405, 811, 823], [418, 806, 818], [428, 803, 814],
];

const bandPins = () => {
  const pins = [];
  let k = 0;
  for (let y = 120; y < 426; y += 1.2) {
    const i = SPINE.findIndex(([sy]) => sy > y);
    const [a, b] = [SPINE[i - 1], SPINE[i]];
    const t = (y - a[0]) / (b[0] - a[0]);
    const lo = a[1] + (b[1] - a[1]) * t;
    const hi = a[2] + (b[2] - a[2]) * t;
    const spread = [0, 0.9, 0.35, 1, 0.15, 0.6][k % 6] * (0.8 + 0.2 * Math.abs(Math.sin(k * 1.7)));
    const tone = [20, 63, 222].includes(k) ? "orange" : [32, 72, 157, 180].includes(k) ? "amber" : [155, 183].includes(k) ? "grey" : "green";
    pins.push({ x: lo + (hi - lo) * spread, y, tone });
    k += 1;
  }
  return pins;
};

const PINS = [
  { x: 758, y: 103, tone: "green" },
  { x: 754, y: 106, tone: "grey" },
  { x: 734, y: 114, tone: "green" },
  ...bandPins(),
  { x: 824, y: 293, tone: "green" },
  { x: 811, y: 425, tone: "green" },
  { x: 803, y: 429, tone: "green" },
  { x: 806, y: 438, tone: "green" },
  { x: 815, y: 442, tone: "green" },
  { x: 807, y: 449, tone: "grey" },
  { x: 805, y: 453, tone: "grey" },
  { x: 802, y: 459, tone: "green" },
  { x: 803, y: 462, tone: "grey" },
  { x: 801, y: 467, tone: "grey" },
  { x: 800, y: 470, tone: "grey" },
].sort((a, b) => a.y - b.y);

const RIVER_LABEL = { $size: 14, $italic: true, $color: "#5b7fb8", $halo: "rgba(255,255,255,0.6)" };

const DamMap = () => (
  <MapDrawing viewBox="0 0 1595 563" preserveAspectRatio="xMidYMid slice" role="img" aria-label="Mapa dos instrumentos">
    <defs>
      <linearGradient id="pinGreen" x1="0" y1="0" x2="0" y2="1">
        <stop offset="0" stopColor="#3cc431" />
        <stop offset="1" stopColor="#22a21f" />
      </linearGradient>
      <linearGradient id="pinGrey" x1="0" y1="0" x2="0" y2="1">
        <stop offset="0" stopColor="#8e8e8e" />
        <stop offset="1" stopColor="#6c6c6c" />
      </linearGradient>
    </defs>
    <rect width="1595" height="563" fill={LAND} />
    <West />
    <Center />
    <East />
    <g>
      <PlaceLabel {...RIVER_LABEL} transform="translate(503 356) rotate(-28)">Rio Madeira</PlaceLabel>
      <PlaceLabel {...RIVER_LABEL} transform="translate(1061 177) rotate(-43)">Rio Madeira</PlaceLabel>
      <PlaceLabel $size={12} $italic $color="#6b6b6b" x="1196" y="287">Residencial</PlaceLabel>
      <PlaceLabel $size={12} $italic $color="#6b6b6b" x="1196" y="302">Bosques</PlaceLabel>
      <PlaceLabel $size={12} $italic $color="#6b6b6b" x="1196" y="317">do Madeira</PlaceLabel>
      <PlaceLabel $size={17} x="1447" y="145">Militar</PlaceLabel>
      <PlaceLabel $size={17} $start x="1519" y="225">Eletronor</PlaceLabel>
      <PlaceLabel $size={17} x="1487" y="315">Areia Branca</PlaceLabel>
      <PlaceLabel $size={17} $start x="1536" y="385">Novo H</PlaceLabel>
      <PlaceLabel $size={17} $start x="1570" y="16">Tuc</PlaceLabel>
      <PlaceLabel $size={17} $start x="1566" y="51">pi</PlaceLabel>
      <PlaceLabel $size={13} $color="#333" $halo="none" transform="translate(1423 255) rotate(-41)">Avenida Jorge Teixeira</PlaceLabel>
      <PlaceLabel $size={12} $color="#333" transform="translate(1572 99) rotate(-42)">Rua Poti</PlaceLabel>
      <PlaceLabel $size={12} $color="#333" transform="translate(1521 13) rotate(80)">Prud</PlaceLabel>
      <PlaceLabel $size={12} $color="#333" transform="translate(1533 84) rotate(80)">Morais</PlaceLabel>
    </g>
    {PINS.map((p, i) => <Pin key={i} {...p} />)}
  </MapDrawing>
);

/* ---------- data ---------- */

const SUBMENU = [
  { label: "Explorar", icon: <MdExplore size={30} />, active: true },
  { label: "Instrumentos Cadastrados", icon: <MdDeveloperBoard size={30} /> },
  { label: "Cadastro de Estruturas", icon: <MdCategory size={30} /> },
  { label: "Campanhas", icon: <MdBusinessCenter size={30} /> },
  { label: "Registro de Ocorrências", icon: <MdWarning size={30} /> },
  { label: "Dados Auscultados", icon: <Bars /> },
  { label: "Série Histórica", icon: <MdTimeline size={30} />, nested: true },
  { label: "Seção Instrumentada", icon: <MdPermDataSetting size={30} />, nested: true, ruled: true },
  { label: "Índice de Auscultação", icon: <WorkerReport /> },
  { label: "Índice de Risco da Estrutura", icon: <MdEngineering size={30} /> },
  { label: "Serviços", icon: <MdAccessTime size={30} /> },
];

const SUMMARY = [
  { label: "Normal", count: 572, color: "#26a825" },
  { label: "Em Atenção", count: 6, color: "#cb842c" },
  { label: "Sem informação", count: 32, color: "#777" },
];

const TYPES = ["PZ", "PZS", "PZE", "NA", "MV", "PA", "EH", "MT", "TE", "SD", "DC"];

const STAR = "M11 2.500l2.800 5.800 6.400.9-4.600 4.500 1 6.300L11 17l-5.700 3 1.100-6.300L1.800 9.200l6.400-.9z";

export default function App() {
  return (
    <Page>
      <GlobalStyle />
      <BrowserBar>
        <TabStrip />
        <BrowserRow>
          <BarButton aria-label="Voltar"><Line><path d="M21.500 12h-19M11 3l-9 9 9 9" /></Line></BarButton>
          <BarButton aria-label="Avançar" $color="#cfcfcf"><Line><path d="M2.500 12h19M13 3l9 9-9 9" /></Line></BarButton>
          <BarButton aria-label="Atualizar"><Line width={1.6}><path d="M18.500 5A9.500 9.500 0 1 0 21.500 12M19 1.500V6.500h-5.500" /></Line></BarButton>
          <AddressBox>
            <BarButton as="span" $w={55} $color="#6e6e6e">
              <Line size={22} width={1.5}><rect x="4" y="8" width="16" height="13" rx="2" /><path d="M8 8V5a4 4 0 0 1 8 0v3M12 14v.5" /></Line>
            </BarButton>
            <Address aria-label="Endereço" defaultValue="https://siga.fractaleng.com.br/#!/explore" />
            <BarButton $w={45} $color="#6e6e6e" aria-label="Ler em voz alta">
              <Line size={22}><path d="M2 20L8 4h1l6 16M4.500 14h8M14 3q4 2 4 7M17 1q5 3 5 10" /></Line>
            </BarButton>
            <BarButton $w={45} $size={16} $color="#6e6e6e">aあ</BarButton>
            <BarButton $w={45} $color="#6e6e6e" aria-label="Adicionar aos favoritos">
              <Line size={23}><path d={STAR} /><circle cx="17.500" cy="17" r="6" fill="currentColor" stroke="#fff" /><path d="M17.500 14.500v5M15 17h5" stroke="#fff" /></Line>
            </BarButton>
          </AddressBox>
          <BarButton aria-label="Favoritos">
            <Line size={22} width={1.5}><path d="M14 8.300l-1-.2L10 2 7.500 8l-6 .9L6 13.500 5 20l5.500-3M15 9h8M14 13.500h9M15 18h8" /></Line>
          </BarButton>
          <BarButton aria-label="Coleções">
            <Line size={23} width={1.5}><rect x="8" y="8" width="14" height="14" rx="3" /><path d="M15 11v8M11 15h8M5.500 17L2 6.500Q1.500 4 4 3.500L12 1.500q2-.5 3 2l.5 1" /></Line>
          </BarButton>
          <BarButton $w={60} aria-label="Perfil">
            <svg width="28" height="28" viewBox="0 0 28 28" aria-hidden="true">
              <circle cx="14" cy="14" r="14" fill="#d1ceca" />
              <circle cx="14" cy="10.500" r="6" fill="#8d8885" />
              <path d="M4 23.500a11 9 0 0 1 20 0A14 14 0 0 1 4 23.500z" fill="#8d8885" />
            </svg>
          </BarButton>
          <BarButton aria-label="Configurações">
            <svg width="18" height="6" viewBox="0 0 18 6" fill="#1b1b1b" aria-hidden="true"><circle cx="3" cy="3" r="1.600" /><circle cx="9" cy="3" r="1.600" /><circle cx="15" cy="3" r="1.600" /></svg>
          </BarButton>
        </BrowserRow>
      </BrowserBar>

      <Header>
        <LogoLink href="#!/" aria-label="Início"><Logo /></LogoLink>
        <Brand>SIG²A Fractal</Brand>
        <PageTitle>Explore seu empreendimento</PageTitle>
        <UserButton>DEVELOPER GUSTAVO</UserButton>
        <MoreButton aria-label="Mais opções"><MdMoreVert size={32} /></MoreButton>
      </Header>

      <Body>
        <Sidebar>
          <NavScroll>
            <ModuleList>
              <ModuleLink href="#!/resop"><Resop /><NavLabel>RESOP</NavLabel></ModuleLink>
              <ModuleLink href="#!/resop2"><Resop /><NavLabel>RESOP 2</NavLabel></ModuleLink>
              <ModuleLink href="#!/dams" $open><Dams /><NavLabel>DAMS</NavLabel></ModuleLink>
            </ModuleList>
            <SubList>
              {SUBMENU.map((m) => (
                <SubLink key={m.label} href="#!/explore" $active={m.active} $nested={m.nested} $ruled={m.ruled}>
                  {m.icon}
                  <NavLabel>{m.label}</NavLabel>
                </SubLink>
              ))}
            </SubList>
            <NavFill />
          </NavScroll>
          <ScrollTrack><ScrollThumb /></ScrollTrack>
        </Sidebar>

        <Main>
          <MapArea>
            <DamMap />
            <SummaryCard>
              <SummaryText>Instrumentos apresentados: <b>625</b></SummaryText>
              <SummaryTable>
                <thead>
                  <tr><th>Situação</th><th>Quantidade</th></tr>
                </thead>
                <tbody>
                  {SUMMARY.map((s) => (
                    <tr key={s.label}>
                      <StatusCell scope="row" $color={s.color}>{s.label}</StatusCell>
                      <td>{s.count}</td>
                    </tr>
                  ))}
                </tbody>
              </SummaryTable>
            </SummaryCard>
            <SearchInput aria-label="Pesquisar instrumento" placeholder="Pesquise pelo nome do instrumento aqui" />
            <Coordinates>LngLat: -63.98 : -8.80</Coordinates>
            <MapControls>
              <LayersButton aria-label="Camadas"><Layers /></LayersButton>
              <ZoomGroup>
                <ZoomButton aria-label="Aproximar"><svg width="16" height="16" viewBox="0 0 16 16" aria-hidden="true"><path d="M8 1v14M1 8h14" stroke="#000" strokeWidth="2.200" /></svg></ZoomButton>
                <ZoomButton aria-label="Afastar"><svg width="16" height="16" viewBox="0 0 16 16" aria-hidden="true"><path d="M1 8h14" stroke="#000" strokeWidth="2.200" /></svg></ZoomButton>
              </ZoomGroup>
            </MapControls>
            <Attribution href="#leaflet">Leaflet</Attribution>
          </MapArea>

          <Panel>
            <DamColumn>
              <DamTitle>Escolha a Barragem</DamTitle>
              <FieldLabel htmlFor="dam">Barragem</FieldLabel>
              <SelectWrap>
                <DamSelect id="dam" defaultValue="sa"><option value="sa">UHE Santo Antônio</option></DamSelect>
                <svg width="10" height="6" viewBox="0 0 10 6" aria-hidden="true"><path d="M0 0h10L5 6z" fill="#757575" /></svg>
              </SelectWrap>
            </DamColumn>
            <FilterColumn>
              <FilterTitle>Filtro Por Tipo de Instrumento</FilterTitle>
              <TypeGrid>
                {TYPES.map((t) => <TypeButton key={t}>{t}</TypeButton>)}
                <TypeButton $flat>EM</TypeButton>
              </TypeGrid>
            </FilterColumn>
          </Panel>
        </Main>
      </Body>
    </Page>
  );
}
